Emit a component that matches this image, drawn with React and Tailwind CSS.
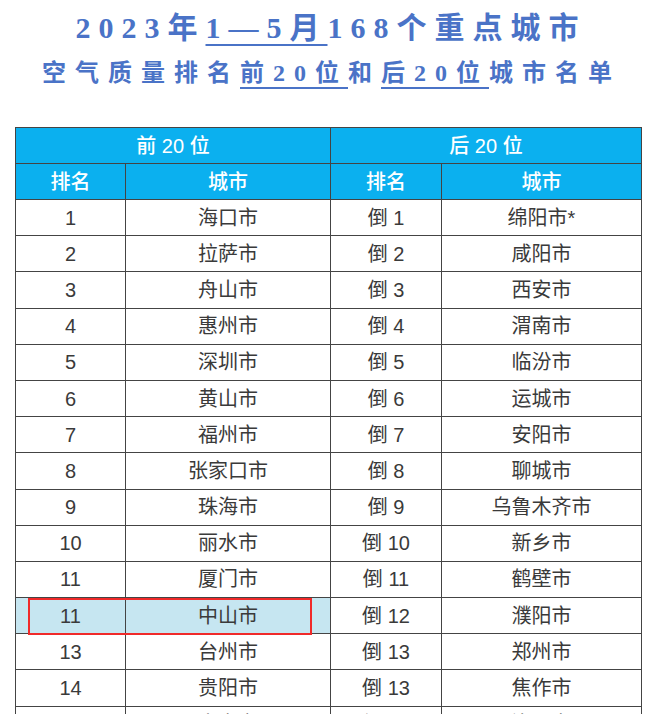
import React from "react";

const left = [
  ["1", "海口市"], ["2", "拉萨市"], ["3", "舟山市"], ["4", "惠州市"], ["5", "深圳市"],
  ["6", "黄山市"], ["7", "福州市"], ["8", "张家口市"], ["9", "珠海市"], ["10", "丽水市"],
  ["11", "厦门市"], ["11", "中山市"], ["13", "台州市"], ["14", "贵阳市"], ["15", "南宁市"],
];
const right = [
  ["倒 1", "绵阳市*"], ["倒 2", "咸阳市"], ["倒 3", "西安市"], ["倒 4", "渭南市"], ["倒 5", "临汾市"],
  ["倒 6", "运城市"], ["倒 7", "安阳市"], ["倒 8", "聊城市"], ["倒 9", "乌鲁木齐市"], ["倒 10", "新乡市"],
  ["倒 11", "鹤壁市"], ["倒 12", "濮阳市"], ["倒 13", "郑州市"], ["倒 13", "焦作市"], ["倒 15", "洛阳市"],
];

const cell = "flex items-center justify-center border-r border-b border-[#444]";

export default function App() {
  return (
    <div className="w-[654px] h-[714px] overflow-hidden bg-white" style={{ fontFamily: '"Liberation Sans", "Noto Sans CJK SC", sans-serif' }}>
      <div className="pt-[10px] flex flex-col items-center text-[#4a73c7] font-bold" style={{ fontFamily: '"Liberation Serif", "Noto Sans CJK SC", serif' }}>
        <div className="h-[36px] leading-[36px] text-[30px] tracking-[8px] pl-[8px]">
          2023年<span className="underline decoration-2 underline-offset-[6px]">1—5月</span>168个重点城市
        </div>
        <div className="mt-[11px] h-[32px] leading-[32px] text-[24px] tracking-[9px] pl-[9px]">
          空气质量排名<span className="underline decoration-2 underline-offset-[6px]">前20位</span>和<span className="underline decoration-2 underline-offset-[6px]">后20位</span>城市名单
        </div>
      </div>

      <div className="relative mt-[38px] ml-[15px] w-[627px] border-l border-t border-[#444]">
        <div className="grid grid-cols-[315px_311px] h-[36px] bg-[#0bb0ef] text-white text-[20px] font-medium">
          <div className={cell}>前 20 位</div>
          <div className={cell}>后 20 位</div>
        </div>
        <div className="grid grid-cols-[110px_205px_111px_200px] h-[36px] bg-[#0bb0ef] text-white text-[20px] font-medium">
          <div className={cell}>排名</div>
          <div className={cell}>城市</div>
          <div className={cell}>排名</div>
          <div className={cell}>城市</div>
        </div>
        {left.map((l, i) => {
          const hl = i === 11;
          return (
            <div key={i} className="grid grid-cols-[110px_205px_111px_200px] h-[36.2px] text-[20px] text-[#3a3a3a]">
              <div className={`${cell} ${hl ? "bg-[#c6e6f1]" : ""}`}>{l[0]}</div>
              <div className={`${cell} ${hl ? "bg-[#c6e6f1]" : ""}`}>{l[1]}</div>
              <div className={cell}>{right[i][0]}</div>
              <div className={cell}>{right[i][1]}</div>
            </div>
          );
        })}
        <div className="absolute left-[12px] top-[470px] w-[284px] h-[37px] border-2 border-[#f02a2a]" />
      </div>
    </div>
  );
}
